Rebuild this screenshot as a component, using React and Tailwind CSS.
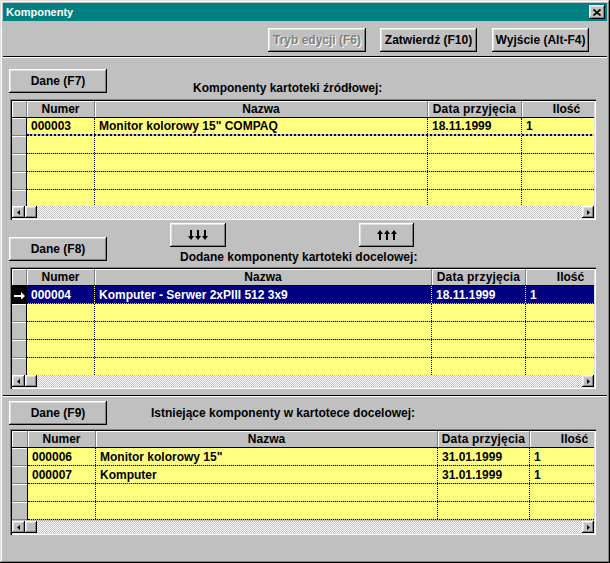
import React from "react";

const RAISED =
  "bg-[#c0c0c0] shadow-[inset_-1px_-1px_#000,inset_1px_1px_#fff,inset_-2px_-2px_#808080,inset_2px_2px_#dfdfdf]";

function Btn({ children, className = "", disabled = false }) {
  return (
    <div className={`flex shrink-0 items-center justify-center ${RAISED} ${className}`}>
      {disabled ? (
        <span className="text-[#808080] [text-shadow:1px_1px_0_#fff]">{children}</span>
      ) : (
        <span>{children}</span>
      )}
    </div>
  );
}

function ArrowsGlyph({ up }) {
  const arrows = [0, 7, 14].map((x0) =>
    up ? (
      <g key={x0}>
        <rect x={x0 + 2} y={3} width={2} height={7} fill="#000" />
        <polygon points={`${x0},4 ${x0 + 6},4 ${x0 + 3},0`} fill="#000" />
      </g>
    ) : (
      <g key={x0}>
        <rect x={x0 + 2} y={0} width={2} height={7} fill="#000" />
        <polygon points={`${x0},6 ${x0 + 6},6 ${x0 + 3},10`} fill="#000" />
      </g>
    )
  );
  return (
    <svg width="20" height="10" viewBox="0 0 20 10">
      {arrows}
    </svg>
  );
}

function ScrollBar() {
  return (
    <div className="flex h-[12px] shrink-0">
      <div className={`flex w-[13px] items-center justify-center ${RAISED}`}>
        <svg width="3" height="5" viewBox="0 0 3 5">
          <polygon points="3,0 3,5 0,2.5" fill="#000" />
        </svg>
      </div>
      <div className={`w-[12px] ${RAISED}`} />
      <div className="flex-1 bg-[image:repeating-conic-gradient(#c0c0c0_0%_25%,#ffffff_0%_50%)] bg-[length:2px_2px]" />
      <div className={`flex w-[12px] items-center justify-center ${RAISED}`}>
        <svg width="3" height="5" viewBox="0 0 3 5">
          <polygon points="0,0 0,5 3,2.5" fill="#000" />
        </svg>
      </div>
    </div>
  );
}

function Grid({ w, rows, totalRows, mode, heightClass }) {
  const hdr =
    "flex h-full shrink-0 items-center justify-center border-r border-[#808080] shadow-[inset_1px_1px_#fff]";
  const all = [];
  for (let i = 0; i < totalRows; i++) all.push(rows[i] || null);
  return (
    <div
      className={`ml-[7px] flex w-[586px] flex-col overflow-hidden p-[2px] shadow-[inset_1px_1px_#808080,inset_2px_2px_#000,inset_-1px_-1px_#fff,inset_-2px_-2px_#dfdfdf] ${heightClass}`}
    >
      <div className="flex h-[17px] shrink-0 overflow-hidden border-b border-black bg-[#c0c0c0]">
        <div className={hdr} style={{ width: w.ind }} />
        <div className={hdr} style={{ width: w.num }}>Numer</div>
        <div className={hdr} style={{ width: w.naz }}>Nazwa</div>
        <div className={`${hdr} tracking-[0.2px]`} style={{ width: w.dat }}>Data przyjęcia</div>
        <div className={hdr} style={{ width: w.il }}>Ilość</div>
      </div>
      <div className="flex-1 overflow-hidden">
        {all.map((r, i) => {
          const active = mode === "active" && i === 0;
          const outline = mode === "outline" && i === 0;
          const cellBase = active
            ? "flex h-full shrink-0 items-center border-r border-dotted border-[#ffff80] bg-[#000080] pl-[4px] text-white"
            : "flex h-full shrink-0 items-center border-r border-dotted border-black bg-[#ffff80] pl-[4px]";
          return (
            <div key={i} className="flex h-[18px] overflow-hidden">
              {active ? (
                <div
                  className="flex h-full shrink-0 items-center justify-center border-r border-black bg-black"
                  style={{ width: w.ind }}
                >
                  <svg width="11" height="7" viewBox="0 0 11 7">
                    <rect x="0" y="3" width="8" height="2" fill="#fff" />
                    <polygon points="7,0 11,4 7,8" fill="#fff" />
                  </svg>
                </div>
              ) : (
                <div
                  className="h-full shrink-0 border-r border-black bg-[#c0c0c0] shadow-[inset_0_1px_#fff,inset_0_-1px_#808080]"
                  style={{ width: w.ind }}
                />
              )}
              <div
                className={`flex flex-1 ${
                  outline
                    ? "border-b-2 border-dotted border-[#000080]"
                    : "border-b border-dotted border-black"
                }`}
              >
                <div className={cellBase} style={{ width: w.num }}>{r ? r[0] : ""}</div>
                <div className={cellBase} style={{ width: w.naz }}>{r ? r[1] : ""}</div>
                <div className={cellBase} style={{ width: w.dat }}>{r ? r[2] : ""}</div>
                <div className={cellBase} style={{ width: w.il }}>{r ? r[3] : ""}</div>
              </div>
            </div>
          );
        })}
      </div>
      <ScrollBar />
    </div>
  );
}

export default function App() {
  return (
    <div className="h-[563px] w-[610px] overflow-hidden bg-[#c0c0c0] p-[3px] font-['Liberation_Sans',Arial,sans-serif] text-[12px] font-bold leading-[14px] text-black shadow-[inset_-1px_-1px_#000,inset_1px_1px_#dfdfdf,inset_-2px_-2px_#808080,inset_2px_2px_#fff]">
      <div className="flex flex-col">
        {/* Title bar */}
        <div className="flex h-[18px] items-center justify-between bg-[#008080] pl-[3px] pr-[2px]">
          <span className="text-[11px] text-white">Komponenty</span>
          <div className={`flex h-[14px] w-[16px] items-center justify-center ${RAISED}`}>
            <svg width="8" height="7" viewBox="0 0 8 7">
              <path d="M0.5 0.5L7.5 6.5M7.5 0.5L0.5 6.5" stroke="#000" strokeWidth="1.7" />
            </svg>
          </div>
        </div>

        {/* Toolbar */}
        <div className="mt-[7px] flex h-[24px] justify-end pr-[18px]">
          <Btn className="w-[98px]" disabled>Tryb edycji (F6)</Btn>
          <Btn className="ml-[14px] w-[97px]">Zatwierdź (F10)</Btn>
          <Btn className="ml-[15px] w-[97px]">Wyjście (Alt-F4)</Btn>
        </div>

        <div className="mt-[4px] h-[2px] border-t border-black border-b border-b-white" />

        {/* Section 1 */}
        <div className="mt-[11px] flex h-[24px] items-start">
          <Btn className="ml-[6px] h-[24px] w-[98px]">Dane (F7)</Btn>
          <span className="ml-[86px] mt-[12px] whitespace-nowrap">Komponenty kartoteki źródłowej:</span>
        </div>
        <div className="mt-[6px]">
          <Grid
            heightClass="h-[121px]"
            w={{ ind: 15, num: 68, naz: 333, dat: 94, il: 90 }}
            rows={[["000003", 'Monitor kolorowy 15" COMPAQ', "18.11.1999", "1"]]}
            totalRows={5}
            mode="outline"
          />
        </div>

        {/* Section 2 */}
        <div className="mt-[3px] flex h-[44px] items-start">
          <Btn className="ml-[6px] mt-[14px] h-[24px] w-[98px]">Dane (F8)</Btn>
          <div className="ml-[63px] flex flex-col">
            <div className="flex">
              <div className={`flex h-[24px] w-[56px] items-center justify-center ${RAISED}`}>
                <ArrowsGlyph />
              </div>
              <div className={`ml-[133px] flex h-[24px] w-[55px] items-center justify-center ${RAISED}`}>
                <ArrowsGlyph up />
              </div>
            </div>
            <span className="ml-[10px] mt-[3px] whitespace-nowrap">Dodane komponenty kartoteki docelowej:</span>
          </div>
        </div>
        <Grid
          heightClass="h-[122px]"
          w={{ ind: 15, num: 68, naz: 337, dat: 94, il: 90 }}
          rows={[["000004", "Komputer - Serwer 2xPIII 512 3x9", "18.11.1999", "1"]]}
          totalRows={5}
          mode="active"
        />

        <div className="mt-[6px] h-[2px] border-t border-black border-b border-b-white" />

        {/* Section 3 */}
        <div className="mt-[4px] flex h-[24px] items-start">
          <Btn className="ml-[6px] h-[24px] w-[98px]">Dane (F9)</Btn>
          <span className="ml-[44px] mt-[5px] whitespace-nowrap">Istniejące komponenty w kartotece docelowej:</span>
        </div>
        <div className="mt-[4px]">
          <Grid
            heightClass="h-[106px]"
            w={{ ind: 16, num: 68, naz: 342, dat: 92, il: 90 }}
            rows={[
              ["000006", 'Monitor kolorowy 15"', "31.01.1999", "1"],
              ["000007", "Komputer", "31.01.1999", "1"],
            ]}
            totalRows={4}
            mode="none"
          />
        </div>
      </div>
    </div>
  );
}
